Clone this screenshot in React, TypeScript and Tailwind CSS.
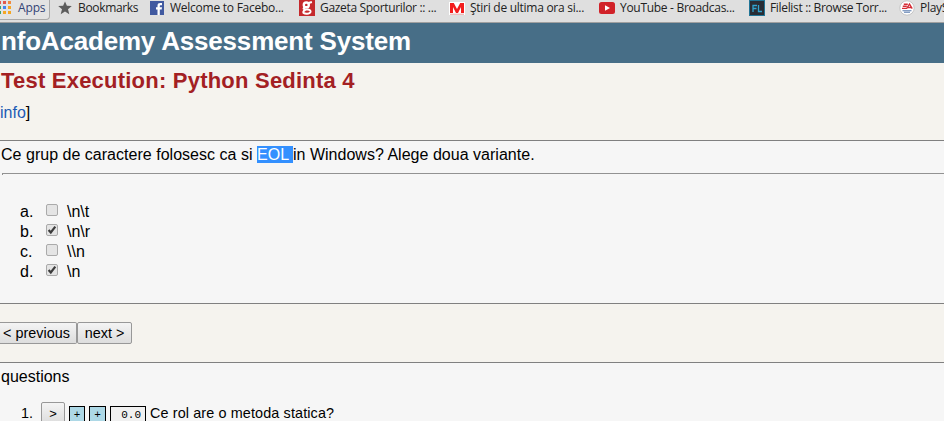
import type { ReactNode } from "react";

function Bookmark({ width, icon, label, text = "" }: { width: string; icon: ReactNode; label: string; text?: string }) {
  return (
    <div className={`flex h-4 shrink-0 items-center whitespace-nowrap ${width}`}>
      <span className="mr-1 flex h-4 w-4 shrink-0 items-center justify-center">{icon}</span>
      <span className={text}>{label}</span>
    </div>
  );
}

function AppsIcon() {
  const colors = ["#e2594d", "#e2594d", "#f08a3c", "#35a56b", "#4385ef", "#f5a623", "#35a56b", "#f5a623", "#f5a623"];
  return (
    <svg width="16" height="16" viewBox="0 0 16 16" shapeRendering="crispEdges">
      {colors.map((c, i) => (
        <rect key={i} x={3 + (i % 3) * 5} y={1 + Math.floor(i / 3) * 5} width="3" height="3" fill={c} />
      ))}
    </svg>
  );
}

function StarIcon() {
  return (
    <svg width="14" height="14" viewBox="0 0 14 14">
      <path d="M7 .5 8.9 4.8l4.9.3L10 8.3l1.3 5L7 10.6l-4.3 2.7 1.3-5L.2 5.1l4.9-.3z" fill="#5c5c5c" />
    </svg>
  );
}

function FacebookIcon() {
  return (
    <svg width="14" height="14" viewBox="0 0 14 14">
      <rect width="14" height="14" fill="#4059a0" />
      <path d="M7.5 14V8.5H6V6.3h1.5V4.7C7.5 2.7 8.6 2 10.2 2H12v2.2h-1.3c-.7 0-.9.3-.9.9v1.2H12l-.3 2.2H9.8V14z" fill="#fff" />
    </svg>
  );
}

function GazetaIcon() {
  return (
    <svg width="16" height="16" viewBox="0 0 16 16">
      <rect width="16" height="16" fill="#c5292c" />
      <ellipse cx="7.3" cy="4.9" rx="2.5" ry="2.4" fill="none" stroke="#fff" strokeWidth="2.4" />
      <path d="M9.5 3 12.9 2M5.3 7.4Q3.5 9 6 9.4L9 9.6Q12 10 11.5 12Q10.8 14 7.5 13.8Q4 13.6 4.3 11.8Q4.5 10.5 6.5 9.7" fill="none" stroke="#fff" strokeWidth="2" />
    </svg>
  );
}

function MediafaxIcon() {
  return (
    <svg width="16" height="16" viewBox="0 0 16 16">
      <rect y="2" width="16" height="13" fill="#fff" />
      <path d="M1 13V3h3.8L8 9l3.2-6H15v10h-3V7l-3 6H7L4 7v6z" fill="#f21d1d" />
      <path d="M1 14.2h14" stroke="#e69d9d" />
    </svg>
  );
}

function YouTubeIcon() {
  return (
    <svg width="16" height="16" viewBox="0 0 16 16">
      <rect y="2" width="16" height="12" rx="2.5" fill="#d12229" />
      <path d="M6 5.2 11 8l-5 2.8z" fill="#fff" />
    </svg>
  );
}

function FilelistIcon() {
  return (
    <svg width="16" height="16" viewBox="0 0 16 16">
      <rect x=".5" y=".5" width="15" height="15" fill="#292d35" stroke="#217597" />
      <path d="M4 12V5.5h4M4 8.5h3.5M9.5 5v6.5h3.5" fill="none" stroke="#32a4d0" strokeWidth="1.3" />
    </svg>
  );
}

function EaIcon() {
  return (
    <svg width="16" height="16" viewBox="0 0 16 16">
      <circle cx="8" cy="8" r="7.2" fill="#fff" stroke="#c5c5c5" />
      <path d="M4.8 4.2h4M3.8 6.2h4M3 8.4h4.8L10.5 4l2.7 4.6M9 7.5h3" fill="none" stroke="#d52b35" strokeWidth="1.4" />
      <path d="M3.5 10.8h9M5 12.3h6" stroke="#5e7fb0" strokeWidth="1.1" />
    </svg>
  );
}

function Checkbox({ checked }: { checked: boolean }) {
  return (
    <span role="checkbox" aria-checked={checked} className="mr-2 ml-[14px] block h-3 w-3">
      <svg width="12" height="12" viewBox="0 0 12 12" className="block overflow-visible">
        <rect x=".5" y=".5" width="11" height="11" rx="1.5" fill="#e4e4e4" stroke="#aaa" />
        {checked && <path d="m2.6 6 2.2 2.5L9.3 2.7" fill="none" stroke="#3c3c3c" strokeWidth="2.2" />}
      </svg>
    </span>
  );
}

const answers = [
  { letter: "a.", text: "\\n\\t", checked: false },
  { letter: "b.", text: "\\n\\r", checked: true },
  { letter: "c.", text: "\\\\n", checked: false },
  { letter: "d.", text: "\\n", checked: true },
];

export default function App() {
  return (
    <div className="h-[421px] w-[944px] overflow-hidden bg-[#f5f3ee] font-['Liberation_Sans',Arial,sans-serif] text-base text-black">
      <nav className="flex h-[23px] overflow-hidden border-b border-[#a0a0a0] bg-[#dfdfdf] font-['Open_Sans',sans-serif] text-xs text-[#222]">
        <div className="-mt-1 flex h-6 w-[57px] shrink-0 items-center">
          <div className="flex h-6 w-[50px] items-center rounded-br border-r border-b border-[#aaa] bg-[#e3e3e3]">
            <div className="-ml-[5px] flex items-center text-[#334376]">
              <AppsIcon />
              <span className="ml-[7px] tracking-[-0.15px]">Apps</span>
            </div>
          </div>
        </div>
        <Bookmark width="w-[92px]" icon={<StarIcon />} label="Bookmarks" text="ml-px tracking-[-0.33px]" />
        <Bookmark width="w-[150px]" icon={<FacebookIcon />} label="Welcome to Facebo..." text="ml-px tracking-[-0.25px]" />
        <Bookmark width="w-[150px]" icon={<GazetaIcon />} label="Gazeta Sporturilor :: ..." text="ml-px tracking-[-0.33px]" />
        <Bookmark width="w-[150px]" icon={<MediafaxIcon />} label="Ştiri de ultima ora si..." text="ml-px tracking-[-0.27px]" />
        <Bookmark width="w-[150px]" icon={<YouTubeIcon />} label="YouTube - Broadcas..." text="ml-px tracking-[-0.3px]" />
        <Bookmark width="w-[150px]" icon={<FilelistIcon />} label="Filelist :: Browse Torr..." text="ml-px tracking-[-0.33px]" />
        <Bookmark width="w-[150px]" icon={<EaIcon />} label="PlayS" text="ml-px tracking-[-0.3px]" />
      </nav>
      <header className="h-10 bg-[#476e87] pt-[3px]">
        <h1 className="ml-px text-[26px] leading-[30px] font-bold tracking-[-0.19px] whitespace-nowrap text-white">nfoAcademy Assessment System</h1>
      </header>
      <section className="h-[77px] pt-1">
        <h2 className="ml-px text-[22px] leading-7 font-bold tracking-[0.22px] text-[#a32023]">Test Execution: Python Sedinta 4</h2>
        <p className="mt-[9px] leading-[18px]"><span className="text-[#1c5bb5]">info</span>]</p>
      </section>
      <section className="h-[164px] border-y border-[#808080] bg-[#f6f6f6] pt-[5px]">
        <p className="ml-px flex h-[18px] leading-[18px] tracking-[0.02px] whitespace-pre">
          <span>Ce grup de caractere folosesc ca si </span>
          <span className="h-[17px] bg-[#3390ff] text-white">EOL </span>
          <span>in Windows? Alege doua variante.</span>
        </p>
        <hr className="mt-[9px] ml-0.5 h-0.5 border-t border-l border-[#929292] border-b-0" />
        <ol className="mt-[27px]">
          {answers.map((a) => (
            <li key={a.letter} className="flex h-5 items-center">
              <span className="w-8 pl-5 leading-5">{a.letter}</span>
              <span className="-mt-1"><Checkbox checked={a.checked} /></span>
              <span className="ml-px leading-5">{a.text}</span>
            </li>
          ))}
        </ol>
      </section>
      <section className="flex h-[58px] pt-[18px] text-[14.4px]">
        <button className="h-[22px] w-[77px] rounded-r-[2px] border border-l-0 border-[#989898] bg-linear-to-b from-[#f4f4f4] to-[#dddddd] pr-[3px] leading-5 whitespace-nowrap">&lt; previous</button>
        <button className="h-[22px] w-[55px] rounded-[2px] border border-[#989898] bg-linear-to-b from-[#f4f4f4] to-[#dddddd] leading-5 whitespace-nowrap">next &gt;</button>
      </section>
      <section className="h-[59px] border-t border-[#808080] bg-[#f6f6f6] pt-[5px]">
        <p className="ml-px leading-[18px]">questions</p>
        <div className="mt-4 flex whitespace-nowrap">
          <span className="w-[41px] pr-2 text-right text-[14.4px] leading-[22px]">1.</span>
          <button className="h-[22px] w-6 rounded-[2px] border border-[#989898] bg-linear-to-b from-[#f4f4f4] to-[#dddddd] text-[13px] leading-[21px]">&gt;</button>
          <div className="mt-1 ml-1 flex gap-1 font-['Liberation_Mono',monospace] text-[11px] leading-4">
            <span className="h-[18px] w-4 border border-black bg-[#add8e6] text-center">+</span>
            <span className="h-[18px] w-[17px] border border-black bg-[#add8e6] text-center">+</span>
            <span className="h-[18px] w-9 border border-black bg-[#f0f0f0] pr-1 text-right">0.0</span>
          </div>
          <span className="ml-1 text-[14.4px] leading-[22px] tracking-[0.12px]">Ce rol are o metoda statica?</span>
        </div>
      </section>
    </div>
  );
}
